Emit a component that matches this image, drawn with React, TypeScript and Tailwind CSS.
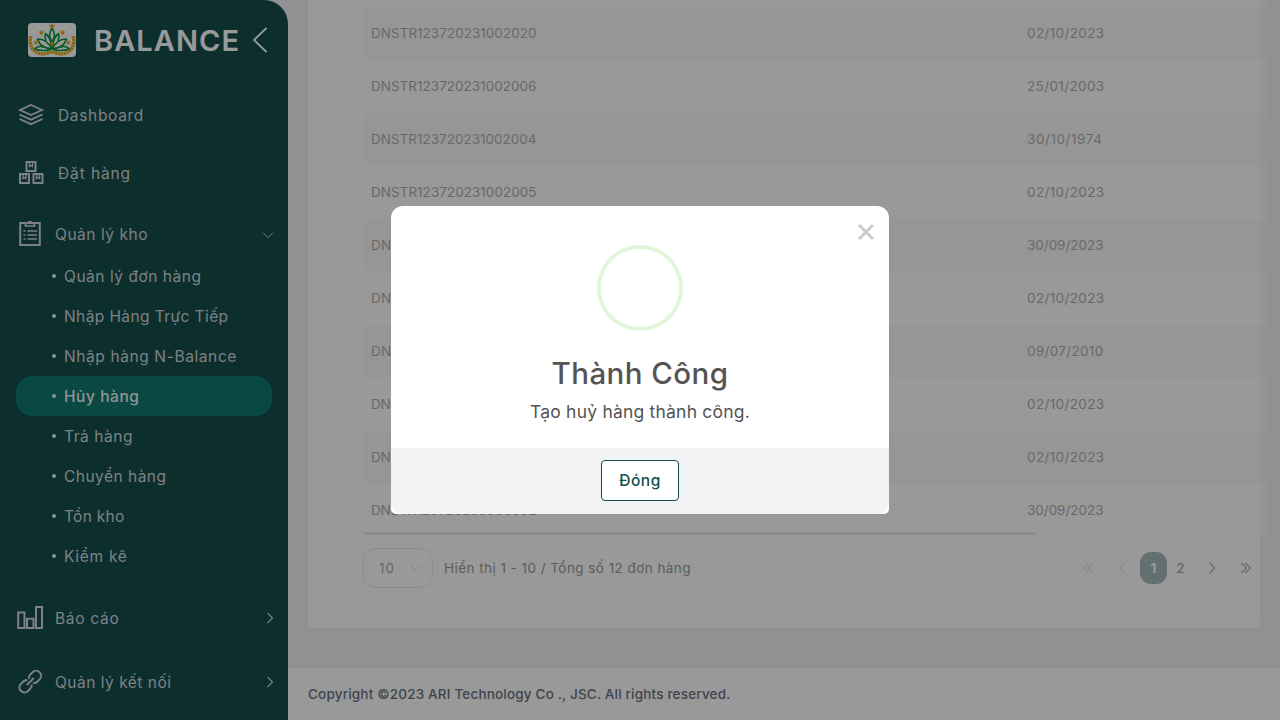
import { useLayoutEffect, useRef, useState, type ReactNode } from "react";

// Text set to a fixed measure: letter spacing is spread over the line.
function Fit({ text, w, className = "" }: { text: string; w: number; className?: string }) {
  const ref = useRef<HTMLSpanElement>(null);
  const [gap, setGap] = useState(0);
  useLayoutEffect(() => {
    if (ref.current) setGap((w - ref.current.getBoundingClientRect().width) / text.length);
  }, [text, w]);
  return (
    <span ref={ref} className={`inline-block whitespace-nowrap ${className}`} style={{ letterSpacing: gap }}>
      {text}
    </span>
  );
}

function Chevron({ d, className = "", size = 16 }: { d: string; className?: string; size?: number }) {
  return (
    <svg width={size} height={size} viewBox="0 0 16 16" fill="none" stroke="currentColor" strokeWidth="1.1" className={className}>
      <path d={d} />
    </svg>
  );
}
const RIGHT = "M5.5 3l5 5-5 5";
const LEFT = "M10.5 3l-5 5 5 5";
const DOWN = "M2.5 5.5l5.5 5.5 5.5-5.5";

function Star({ x, y, s }: { x: number; y: number; s: number }) {
  return (
    <path
      transform={`translate(${x} ${y}) scale(${s})`}
      fill="#e5a81c"
      d="M0-3L.8-1H3L1.2.4 1.9 2.6 0 1.3-1.9 2.6-1.2.4-3-1H-.8z"
    />
  );
}

function Logo() {
  return (
    <svg width="48" height="34" viewBox="0 0 48 34" className="rounded-[4px] bg-white">
      <g fill="none" stroke="#e5a81c" strokeWidth="3.4" strokeDasharray="2.4 .5">
        <path d="M3 13C-1 24 9 36 23.500 28.500" />
        <path d="M45 13C49 24 39 36 24.500 28.500" />
      </g>
      <g fill="#fff" stroke="#0b9444" strokeWidth="1.6" strokeLinejoin="round">
        <path d="M24 26C13 23 11 22 6.500 26c6 2 12 2 17.500 0zM24 26c11-3 13-4 17.500 0-6 2-12 2-17.500 0z" />
        <path d="M24 25.500C20 18 15 16 9.500 16c2 6 7 9.500 14.500 9.500zM24 25.500c4-7.500 9-9.500 14.500-9.500-2 6-7 9.500-14.500 9.500z" />
        <path d="M23 23c0-7-2-10-5.500-12.500-1.500 6 1 10 5.500 12.500zM25 23c0-7 2-10 5.500-12.500 1.500 6-1 10-5.500 12.500z" />
        <path d="M24 19c-3.500-5-3.500-9 0-13.500 3.500 4.500 3.500 8.500 0 13.500z" />
      </g>
      <Star x={24} y={3.2} s={1.1} />
      <Star x={13.5} y={9.5} s={1.1} />
      <Star x={34.5} y={9.5} s={1.1} />
      <Star x={8} y={19.5} s={1} />
      <Star x={40} y={19.5} s={1} />
      <Star x={24} y={20.5} s={1} />
    </svg>
  );
}

function Icon({ children }: { children: ReactNode }) {
  return (
    <svg width="28" height="28" viewBox="0 0 28 28" fill="none" stroke="currentColor" strokeWidth="2" className="shrink-0">
      {children}
    </svg>
  );
}

const icons = {
  layers: (
    <Icon>
      <path d="M14 4L25 9 14 14 3 9zM2.500 13.500l11.500 5.200L25.500 13.500M2.500 18l11.500 5.200 11.500-5.200" strokeWidth="1.9" />
    </Icon>
  ),
  boxes: (
    <Icon>
      <path d="M9.500 3h9v9h-9zM3 15h9v9h-9zM16.500 15h9v9h-9z" />
      <path d="M12.500 3.500v4l1.500-1 1.500 1v-4M6 15.500v4l1.500-1 1.500 1v-4M19.500 15.500v4l1.500-1 1.500 1v-4" strokeWidth="1.3" />
    </Icon>
  ),
  clipboard: (
    <Icon>
      <path d="M4.200 3h19.600V25H4.200z" />
      <path d="M9.500 3V6h9V3h-2.700a1.900 1.900 0 00-3.600 0z" strokeWidth="1.700" />
      <path d="M7.500 11h2m2 0h9.500M7.500 15h2m2 0h9.500M7.500 19h2m2 0h9.500" strokeWidth="1.700" />
    </Icon>
  ),
  bars: (
    <Icon>
      <path d="M2.200 8.500h6.300v15.500H2.200zM11 14.800h6.500V24H11zM20 3h6v21h-6z" />
    </Icon>
  ),
  link: (
    <Icon>
      <g transform="translate(14.300 13.600) rotate(-45)">
        <path d="M-5 0H5M1 -3A5 5 0 0 1 5.200 -5H8.200A5 5 0 0 1 8.200 5H5.200A5 5 0 0 1 1 3M-1 -3A5 5 0 0 0 -5.200 -5H-8.200A5 5 0 0 0 -8.200 5H-5.200A5 5 0 0 0 -1 3" />
      </g>
    </Icon>
  ),
};

const subItems: [string, number][] = [
  ["Quản lý đơn hàng", 137.5],
  ["Nhập Hàng Trực Tiếp", 164.5],
  ["Nhập hàng N-Balance", 173],
  ["Hủy hàng", 75.5],
  ["Trả hàng", 69],
  ["Chuyển hàng", 102.5],
  ["Tồn kho", 60.5],
  ["Kiểm kê", 63.5],
];

const rows: [string, string, number][] = [
  ["DNSTR123720231002020", "02/10/2023", 77.5],
  ["DNSTR123720231002006", "25/01/2003", 77.5],
  ["DNSTR123720231002004", "30/10/1974", 75.5],
  ["DNSTR123720231002005", "02/10/2023", 77.5],
  ["DNSTR123720231001003", "30/09/2023", 76.5],
  ["DNSTR123720231001002", "02/10/2023", 77.5],
  ["DNSTR123720231001001", "09/07/2010", 76.5],
  ["DNSTR123720230930004", "02/10/2023", 77.5],
  ["DNSTR123720230930003", "02/10/2023", 77.5],
  ["DNSTR123720230930002", "30/09/2023", 76.5],
];

function Sidebar() {
  return (
    <aside className="flex h-full w-72 shrink-0 flex-col rounded-tr-3xl bg-[#144f4c] text-[15.5px] text-gray-300">
      <div className="flex h-20 shrink-0 items-center pl-7">
        <Logo />
        <Fit text="BALANCE" w={146} className="ml-[18px] pt-0.5 text-[29px] font-semibold text-white" />
        <svg width="16" height="28" viewBox="0 0 16 28" fill="none" stroke="#fff" strokeWidth="1.8" className="ml-3">
          <path d="M14.500 2L2 14l12.500 12" />
        </svg>
      </div>
      <div className="flex h-[70px] shrink-0 items-center pl-[17px]">
        {icons.layers}
        <Fit text="Dashboard" w={86} className="ml-[13px] pt-0.5" />
      </div>
      <div className="flex h-[46px] shrink-0 items-center pl-[17px]">
        {icons.boxes}
        <Fit text="Đặt hàng" w={73} className="ml-[13px] pt-0.5" />
      </div>
      <div className="flex h-[60px] shrink-0 items-center pl-4 pt-4">
        {icons.clipboard}
        <Fit text="Quản lý kho" w={93} className="ml-[11px] pt-0.5" />
        <Chevron d={DOWN} size={14} className="ml-auto mr-[13px] mt-0.5" />
      </div>
      <ul className="flex shrink-0 flex-col px-4">
        {subItems.map(([label, w]) => (
          <li
            key={label}
            className={`flex h-10 items-center rounded-2xl pl-9 ${label === "Hủy hàng" ? "bg-[#0f7970] font-medium text-gray-100" : ""}`}
          >
            <span className="mr-2 size-1 rounded-full bg-gray-100" />
            <Fit text={label} w={w} className="pt-0.5" />
          </li>
        ))}
      </ul>
      <div className="flex h-[84px] shrink-0 items-center pl-4">
        {icons.bars}
        <Fit text="Báo cáo" w={64.5} className="ml-[11px] pt-0.5" />
        <Chevron d={RIGHT} className="ml-auto mr-[10px]" />
      </div>
      <div className="flex h-11 shrink-0 items-center pl-4">
        {icons.link}
        <Fit text="Quản lý kết nối" w={116.5} className="ml-[11px] pt-0.5" />
        <Chevron d={RIGHT} className="ml-auto mr-[10px]" />
      </div>
    </aside>
  );
}

function Pagination() {
  return (
    <div className="flex items-center text-[#2f6561]">
      <Chevron d="M7.500 3L2.500 8l5 5M12 3L7 8l5 5" className="mr-[17px] text-gray-300" />
      <Chevron d={LEFT} className="mr-[10px] text-gray-300" />
      <span className="flex h-8 w-[27px] items-center justify-center rounded-[11px] bg-[#4c7c79] text-[13.5px] font-bold text-white">1</span>
      <span className="ml-[9px] w-[9px] text-center text-[13.5px] font-medium">2</span>
      <Chevron d={RIGHT} className="ml-[19px]" />
      <Chevron d="M3.500 3l5 5-5 5M7.500 3l5 5-5 5" className="ml-[18px]" />
    </div>
  );
}

function Content() {
  return (
    <main className="flex h-full min-w-0 flex-1 flex-col">
      <section className="mx-5 h-[628px] shrink-0 rounded-b-md bg-white pl-[55px]">
        <div className="h-[536px] w-[904px] bg-white pt-[7px] opacity-50">
          <div className="flex h-[529px] flex-col overflow-hidden text-[13.5px] text-[#5e5e5e]">
            {rows.map(([code, date, w], i) => (
              <div
                key={i}
                className={`flex h-[53px] shrink-0 items-center rounded-l-lg pl-2 ${i % 2 === 0 ? "bg-[#f8f8f8]" : "bg-white"}`}
              >
                <div className="w-[656px]">
                  <Fit text={code} w={165.5} />
                </div>
                <Fit text={date} w={w} />
              </div>
            ))}
          </div>
        </div>
        <div className="-mt-1 h-[3px] w-[672px] rounded-full bg-[#d8d8d8] opacity-50" />
        <div className="mt-[13px] flex h-10 items-center opacity-50">
          <div className="flex h-10 w-[70px] items-center justify-between rounded-xl border border-gray-300 pl-[15px] pr-[11px] text-[13.5px] text-gray-600">
            <Fit text="10" w={16} />
            <Chevron d={DOWN} size={12} className="text-gray-400" />
          </div>
          <Fit text="Hiển thị 1 - 10 / Tổng số 12 đơn hàng" w={247} className="ml-[11px] text-[13.5px] text-[#333]" />
          <div className="ml-auto mr-[6px]">
            <Pagination />
          </div>
        </div>
      </section>
      <footer className="mt-10 flex h-[52px] items-center bg-white pl-5 text-[13.5px] font-medium text-gray-500">
        <Fit text="Copyright ©2023 ARI Technology Co ., JSC. All rights reserved." w={422.5} />
      </footer>
    </main>
  );
}

function SuccessDialog() {
  return (
    <div className="absolute inset-0 flex items-center justify-center bg-black/40">
      <div role="dialog" className="relative flex h-[308px] w-[498px] flex-col items-center rounded-b-[5px] rounded-t-xl bg-white text-[#545454]">
        <svg width="18" height="18" viewBox="0 0 18 18" stroke="#ccc" strokeWidth="3" className="absolute right-[14px] top-[17px]">
          <path d="M2 2l14 14M16 2L2 16" />
        </svg>
        <div className="mt-[39px] size-[86px] shrink-0 rounded-full border-4 border-[#e4f5da]" />
        <h2 className="mt-[23px] flex h-[38px] items-center text-[29.5px] font-medium">
          <Fit text="Thành Công" w={177} />
        </h2>
        <p className="mt-1.5 flex h-7 items-center text-[17.5px]">
          <Fit text="Tạo huỷ hàng thành công." w={220} />
        </p>
        <div className="mt-auto flex h-[66px] w-full items-center justify-center rounded-b-xl bg-[#f2f3f5]">
          <button className="mb-px flex h-[41px] w-[78px] items-center justify-center rounded border border-[#134e4a] bg-white text-[15.5px] font-medium text-[#134e4a]">
            <Fit text="Đóng" w={41.5} />
          </button>
        </div>
      </div>
    </div>
  );
}

export default function App() {
  return (
    <div className="relative flex h-[720px] w-[1280px] overflow-hidden bg-[#f0f2f5] font-['Inter','Noto_Sans',sans-serif]">
      <Sidebar />
      <Content />
      <SuccessDialog />
    </div>
  );
}
